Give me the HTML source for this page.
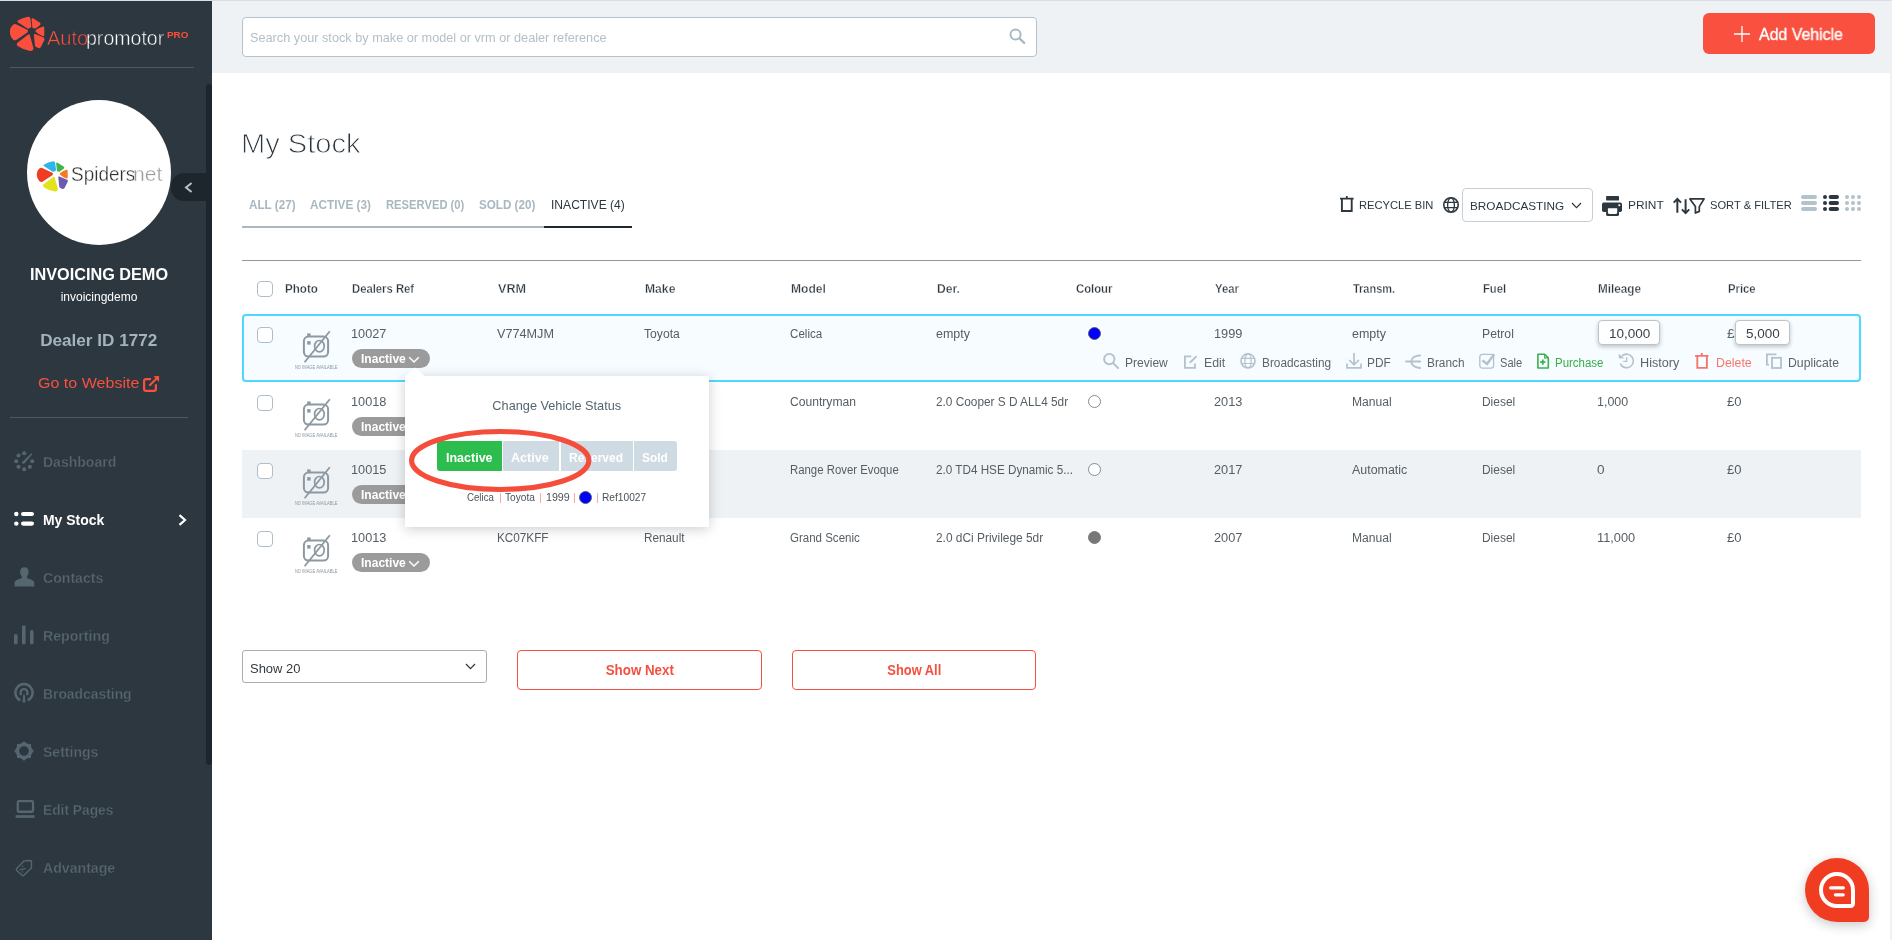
<!DOCTYPE html>
<html lang="en"><head><meta charset="utf-8"><title>My Stock - Autopromotor PRO</title>
<style>

html,body{margin:0;padding:0}
body{width:1892px;height:940px;overflow:hidden;position:relative;background:#fff;font-family:"Liberation Sans",sans-serif;}
#page{position:absolute;left:0;top:0;width:1892px;height:940px;overflow:hidden;will-change:transform}
.t{position:absolute;white-space:nowrap;display:inline-block}
.a{position:absolute}
svg{position:absolute;overflow:visible}
.cb{position:absolute;width:14px;height:14px;border:1px solid #adbecb;border-radius:4px;background:#fff}
.badge{position:absolute;left:352px;width:78px;height:19px;border-radius:10px;background:#9b9b9b}
.row{position:absolute;left:242px;width:1619px;height:68px}

</style></head>
<body>
<div id="page">
<div id="bg">
<div class="a" style="left:0;top:0;width:212px;height:940px;background:#2d373f"></div>
<div class="a" style="left:212px;top:0;width:1680px;height:73px;background:#eef2f5"></div>
<div class="a" style="left:1890px;top:0;width:2px;height:940px;background:#f0f1f2"></div>
<div class="a" style="left:0;top:0;width:1892px;height:1px;background:#d9dee2"></div>
<div class="a" style="left:206px;top:84px;width:6px;height:681px;background:#1e262d;border-radius:3px"></div>
<div class="a" style="left:171px;top:173px;width:36px;height:28px;background:#1e262d;border-radius:13px 0 0 13px"></div>
<svg style="left:184px;top:182px" width="9" height="11" viewBox="0 0 9 11" fill="none" stroke="#b4c1c9" stroke-width="2"><path d="M7.6 1 L2 5.5 L7.6 10"/></svg>
</div>
<aside id="sidebar">
<svg style="left:8px;top:13px" width="40" height="42" viewBox="0 0 895 940" preserveAspectRatio="none"><path d="M232,188 Q330,126 452,104 Q474,102 478,128 L502,300 Q498,322 448,330 Z" fill="#fb4f3d" stroke="#fb4f3d" stroke-width="44" stroke-linejoin="round"/><path d="M548,138 L700,232 Q712,244 700,256 L612,322 Q596,330 566,316 Z" fill="#fb4f3d" stroke="#fb4f3d" stroke-width="44" stroke-linejoin="round"/><path d="M790,322 L790,500 Q700,470 640,410 Q636,398 648,390 Q720,340 790,322 Z" fill="#fb4f3d" stroke="#fb4f3d" stroke-width="44" stroke-linejoin="round"/><path d="M600,490 L790,570 Q800,580 794,596 L712,756 Q696,772 676,760 L626,730 Z" fill="#fb4f3d" stroke="#fb4f3d" stroke-width="44" stroke-linejoin="round"/><path d="M466,498 L548,790 Q548,830 500,830 Q340,800 228,722 Q210,702 226,682 Z" fill="#fb4f3d" stroke="#fb4f3d" stroke-width="44" stroke-linejoin="round"/><path d="M170,272 L420,392 Q432,404 420,418 L172,586 Q150,594 128,580 Q66,520 64,420 Q66,330 128,278 Q150,262 170,272 Z" fill="#fb4f3d" stroke="#fb4f3d" stroke-width="44" stroke-linejoin="round"/></svg>
<span class="t" style="left:46.70px;top:28.07px;font-size:20px;line-height:20px;color:#fb4f3d;transform:scaleX(1.0011);transform-origin:0 0;-webkit-text-stroke:0.5px #2d373f;">Auto</span><span class="t" style="left:85.70px;top:28.07px;font-size:20px;line-height:20px;color:#ffffff;transform:scaleX(0.9771);transform-origin:0 0;-webkit-text-stroke:0.5px #2d373f;">promotor</span>
<span class="t" style="left:167.41px;top:30.88px;font-size:9px;line-height:9px;font-weight:700;color:#fb4f3d;transform:scaleX(1.1012);transform-origin:0 0;">PRO</span>
<div class="a" style="left:10px;top:67px;width:184px;height:1px;background:#4b5a64"></div>
<div class="a" style="left:27px;top:100px;width:144px;height:145px;border-radius:50%;background:#fff"></div>
<svg style="left:35.2px;top:157.6px" width="36" height="37" viewBox="0 0 895 940" preserveAspectRatio="none"><path d="M232,188 Q330,126 452,104 Q474,102 478,128 L502,300 Q498,322 448,330 Z" fill="#2fb5e9" stroke="#2fb5e9" stroke-width="44" stroke-linejoin="round"/><path d="M548,138 L700,232 Q712,244 700,256 L612,322 Q596,330 566,316 Z" fill="#3fb54a" stroke="#3fb54a" stroke-width="44" stroke-linejoin="round"/><path d="M790,322 L790,500 Q700,470 640,410 Q636,398 648,390 Q720,340 790,322 Z" fill="#f47a20" stroke="#f47a20" stroke-width="44" stroke-linejoin="round"/><path d="M600,490 L790,570 Q800,580 794,596 L712,756 Q696,772 676,760 L626,730 Z" fill="#6f58b0" stroke="#6f58b0" stroke-width="44" stroke-linejoin="round"/><path d="M466,498 L548,790 Q548,830 500,830 Q340,800 228,722 Q210,702 226,682 Z" fill="#e2e21e" stroke="#e2e21e" stroke-width="44" stroke-linejoin="round"/><path d="M170,272 L420,392 Q432,404 420,418 L172,586 Q150,594 128,580 Q66,520 64,420 Q66,330 128,278 Q150,262 170,272 Z" fill="#ef3d23" stroke="#ef3d23" stroke-width="44" stroke-linejoin="round"/></svg>
<span class="t" style="left:70.64px;top:162.72px;font-size:21px;line-height:21px;color:#303030;transform:scaleX(0.9032);transform-origin:0 0;-webkit-text-stroke:0.35px #fff;">Spiders</span><span class="t" style="left:132.63px;top:162.72px;font-size:21px;line-height:21px;color:#9a9a9a;transform:scaleX(1.0037);transform-origin:0 0;-webkit-text-stroke:0.4px #fff;">net</span>
<span class="t" style="left:30.99px;top:267.46px;font-size:16px;line-height:16px;font-weight:700;color:#fff;transform:scaleX(1.0150);transform-origin:50% 0;">INVOICING DEMO</span>
<span class="t" style="left:60.64px;top:290.54px;font-size:12px;line-height:12px;color:#fff;transform:scaleX(1.0000);transform-origin:50% 0;">invoicingdemo</span>
<span class="t" style="left:44.30px;top:332.56px;font-size:16px;line-height:16px;font-weight:700;color:#a3b3bd;transform:scaleX(1.0708);transform-origin:50% 0;">Dealer ID 1772</span>
<span class="t" style="left:37.89px;top:375.65px;font-size:14px;line-height:14px;color:#f9503f;transform:scaleX(1.1466);transform-origin:0 0;">Go to Website</span>
<svg style="left:143px;top:376px" width="17" height="16" viewBox="0 0 17 16" fill="none" stroke="#f9503f" stroke-width="2.2">
<path d="M8 3.2 H3 a1.9 1.9 0 0 0 -1.9 1.9 V13 a1.9 1.9 0 0 0 1.9 1.9 H11 a1.9 1.9 0 0 0 1.9 -1.9 V8.2"/><path d="M6.3 9.7 L14 2" stroke-width="2"/><path d="M10.5 0.3 L16.05 -0.05 L16.05 5.9 Z" fill="#f9503f" stroke="none"/></svg>
<div class="a" style="left:10px;top:417px;width:178px;height:1px;background:#4b5a64"></div>
<nav id="menu">
<span class="t" style="left:42.89px;top:455.15px;font-size:14px;line-height:14px;font-weight:700;color:#566670;transform:scaleX(1.0012);transform-origin:0 0;-webkit-text-stroke:0.3px #2d373f;">Dashboard</span>
<span class="t" style="left:42.89px;top:513.15px;font-size:14px;line-height:14px;font-weight:700;color:#fff;transform:scaleX(0.9947);transform-origin:0 0;">My Stock</span>
<span class="t" style="left:42.89px;top:571.15px;font-size:14px;line-height:14px;font-weight:700;color:#566670;transform:scaleX(1.0064);transform-origin:0 0;-webkit-text-stroke:0.3px #2d373f;">Contacts</span>
<span class="t" style="left:42.89px;top:629.15px;font-size:14px;line-height:14px;font-weight:700;color:#566670;transform:scaleX(1.0103);transform-origin:0 0;-webkit-text-stroke:0.3px #2d373f;">Reporting</span>
<span class="t" style="left:42.89px;top:687.15px;font-size:14px;line-height:14px;font-weight:700;color:#566670;transform:scaleX(0.9899);transform-origin:0 0;-webkit-text-stroke:0.3px #2d373f;">Broadcasting</span>
<span class="t" style="left:42.89px;top:745.15px;font-size:14px;line-height:14px;font-weight:700;color:#566670;transform:scaleX(1.0027);transform-origin:0 0;-webkit-text-stroke:0.3px #2d373f;">Settings</span>
<span class="t" style="left:42.89px;top:803.15px;font-size:14px;line-height:14px;font-weight:700;color:#566670;transform:scaleX(0.9842);transform-origin:0 0;-webkit-text-stroke:0.3px #2d373f;">Edit Pages</span>
<span class="t" style="left:42.89px;top:861.15px;font-size:14px;line-height:14px;font-weight:700;color:#566670;transform:scaleX(1.0088);transform-origin:0 0;-webkit-text-stroke:0.3px #2d373f;">Advantage</span>
<svg style="left:13.8px;top:450.8px" width="21" height="21" viewBox="0 0 21 21" fill="#566670"><circle cx="10.20" cy="2.20" r="2.05"/><circle cx="4.54" cy="4.54" r="2.05"/><circle cx="2.20" cy="10.20" r="2.05"/><circle cx="4.54" cy="15.86" r="2.05"/><circle cx="10.20" cy="18.20" r="2.05"/><circle cx="15.86" cy="15.86" r="2.05"/><circle cx="18.20" cy="10.20" r="2.05"/><path d="M8.2 11 L17.4 2.3 L18.4 3.3 L10.4 12.6 Q9 13.2 8.2 12.3 Q7.7 11.6 8.2 11 Z"/></svg>
<svg style="left:14px;top:511px" width="20" height="16" viewBox="0 0 20 16" fill="#fff"><circle cx="2.3" cy="3" r="2.2"/><circle cx="2.3" cy="12.6" r="2.2"/><rect x="7" y="0.9" width="13" height="4.2" rx="2.1"/><rect x="7" y="10.5" width="13" height="4.2" rx="2.1"/></svg>
<svg style="left:177.5px;top:513.5px" width="9" height="12" viewBox="0 0 9 12" fill="none" stroke="#fff" stroke-width="2.2"><path d="M1.5 1.2 L7 6 L1.5 10.8"/></svg>
<svg style="left:13.5px;top:567px" width="21" height="20" viewBox="0 0 21 20" fill="#566670"><path d="M10.4 0.3 C13.2 0.3 14.6 2.4 14.6 4.9 C14.6 7 13.6 8.6 12.9 9.4 C12.7 10.6 13.4 11.2 15 11.8 C18 12.9 20.3 13.8 20.3 16.4 V19.6 H0.5 V16.4 C0.5 13.8 2.8 12.9 5.8 11.8 C7.4 11.2 8.1 10.6 7.9 9.4 C7.2 8.6 6.2 7 6.2 4.9 C6.2 2.4 7.6 0.3 10.4 0.3 Z"/></svg>
<svg style="left:14px;top:624.5px" width="20" height="20" viewBox="0 0 20 20" fill="#566670"><rect x="0" y="9" width="3.6" height="10.6" rx="1.8"/><rect x="8" y="0.2" width="3.6" height="19.4" rx="1.8"/><rect x="16" y="5" width="3.6" height="14.6" rx="1.8"/></svg>
<svg style="left:14px;top:683px" width="20" height="20" viewBox="0 0 20 20" fill="none" stroke="#566670" stroke-width="2.5"><path d="M6.23 17.33 A8.6 8.6 0 1 1 13.77 17.33"/><path d="M7.4 11.94 A3.5 3.5 0 1 1 12.6 11.94" stroke-width="2.3"/><path d="M9.3 11.6 L10.7 11.6 L11.5 19.4 L8.5 19.4 Z" fill="#566670" stroke="none"/></svg>
<svg style="left:14px;top:740.9px" width="20" height="20" viewBox="0 0 20 20" fill="#566670"><path d="M7.2 3.4 L10 0.9 L12.8 3.4 Z" stroke="#566670" stroke-width="1.2" stroke-linejoin="round" transform="rotate(0 10 10)"/><path d="M7.2 3.4 L10 0.9 L12.8 3.4 Z" stroke="#566670" stroke-width="1.2" stroke-linejoin="round" transform="rotate(45 10 10)"/><path d="M7.2 3.4 L10 0.9 L12.8 3.4 Z" stroke="#566670" stroke-width="1.2" stroke-linejoin="round" transform="rotate(90 10 10)"/><path d="M7.2 3.4 L10 0.9 L12.8 3.4 Z" stroke="#566670" stroke-width="1.2" stroke-linejoin="round" transform="rotate(135 10 10)"/><path d="M7.2 3.4 L10 0.9 L12.8 3.4 Z" stroke="#566670" stroke-width="1.2" stroke-linejoin="round" transform="rotate(180 10 10)"/><path d="M7.2 3.4 L10 0.9 L12.8 3.4 Z" stroke="#566670" stroke-width="1.2" stroke-linejoin="round" transform="rotate(225 10 10)"/><path d="M7.2 3.4 L10 0.9 L12.8 3.4 Z" stroke="#566670" stroke-width="1.2" stroke-linejoin="round" transform="rotate(270 10 10)"/><path d="M7.2 3.4 L10 0.9 L12.8 3.4 Z" stroke="#566670" stroke-width="1.2" stroke-linejoin="round" transform="rotate(315 10 10)"/><path fill-rule="evenodd" d="M10 2 A8 8 0 1 0 10 18 A8 8 0 1 0 10 2 Z M10 5.2 A4.8 4.8 0 1 1 10 14.8 A4.8 4.8 0 1 1 10 5.2 Z"/></svg>
<svg style="left:14.5px;top:800px" width="20" height="18" viewBox="0 0 20 18" fill="none" stroke="#566670" stroke-width="2.3"><rect x="2.8" y="1.15" width="15.2" height="10.6" rx="1"/><rect x="0.6" y="15.2" width="18.9" height="2.7" fill="#566670" stroke="none"/></svg>
<svg style="left:15px;top:860px" width="19" height="17" viewBox="0 0 19 17" fill="none" stroke="#566670" stroke-width="1.4" stroke-linejoin="round" stroke-linecap="round"><path d="M9.2 0.85 L15.6 0.45 Q16.5 0.45 16.5 1.4 L16.4 7.9 L8.9 15.3 Q8 16.1 7.1 15.3 L1.7 10.4 Q0.8 9.5 1.7 8.5 Z"/><path d="M5.2 9.95 L10.2 8.55" stroke-width="1.3"/><circle cx="7.5" cy="6.6" r="0.75" fill="#566670" stroke="none"/><circle cx="7.7" cy="12" r="0.75" fill="#566670" stroke="none"/></svg>
</nav>
</aside>
<header id="topbar">
<div class="a" style="left:242px;top:17px;width:793px;height:38px;border:1px solid #b4c3cd;border-radius:4px;background:#fff"></div>
<span class="t" style="left:250.16px;top:30.50px;font-size:13px;line-height:13px;color:#b3bfc7;transform:scaleX(0.9772);transform-origin:0 0;">Search your stock by make or model or vrm or dealer reference</span>
<svg style="left:1008.5px;top:28.5px" width="17" height="16" viewBox="0 0 17 16" fill="none" stroke="#a9b8c1" stroke-width="1.9" stroke-linecap="round"><circle cx="6.55" cy="5.5" r="5.05"/><path d="M10.4 9.4 L15.2 13.9" stroke-width="2.2"/></svg>
<div class="a" style="left:1703px;top:13px;width:172px;height:41px;border-radius:6px;background:#f9503f"></div>
<svg style="left:1734px;top:26px" width="16" height="16" viewBox="0 0 16 16" fill="none" stroke="#fff" stroke-width="1.3"><path d="M8 0 V16 M0 8 H16"/></svg>
<span class="t" style="left:1759.46px;top:27.46px;font-size:16px;line-height:16px;color:#fff;transform:scaleX(0.9932);transform-origin:0 0;-webkit-text-stroke:0.35px #fff;">Add Vehicle</span>
</header>
<main id="content">
<span class="t" style="left:240.95px;top:128.86px;font-size:28.4px;line-height:28.4px;color:#2d373f;transform:scaleX(1.0246);transform-origin:0 0;-webkit-text-stroke:0.9px #fff;">My Stock</span>
<span class="t" style="left:249.11px;top:198.87px;font-size:12.2px;line-height:12.2px;font-weight:700;color:#a9b7c0;transform:scaleX(0.9590);transform-origin:0 0;">ALL (27)</span>
<span class="t" style="left:310.41px;top:198.87px;font-size:12.2px;line-height:12.2px;font-weight:700;color:#a9b7c0;transform:scaleX(0.9676);transform-origin:0 0;">ACTIVE (3)</span>
<span class="t" style="left:386.21px;top:198.87px;font-size:12.2px;line-height:12.2px;font-weight:700;color:#a9b7c0;transform:scaleX(0.9203);transform-origin:0 0;">RESERVED (0)</span>
<span class="t" style="left:479.21px;top:198.87px;font-size:12.2px;line-height:12.2px;font-weight:700;color:#a9b7c0;transform:scaleX(0.9562);transform-origin:0 0;">SOLD (20)</span>
<span class="t" style="left:550.91px;top:198.87px;font-size:12.2px;line-height:12.2px;color:#2d373f;transform:scaleX(0.9912);transform-origin:0 0;">INACTIVE (4)</span>
<div class="a" style="left:242px;top:226px;width:302px;height:2px;background:#a9b7c0"></div>
<div class="a" style="left:544px;top:226px;width:88px;height:2px;background:#1f2830"></div>
<svg style="left:1340px;top:196px" width="14" height="16" viewBox="0 0 14 16" fill="none" stroke="#2d373f" stroke-width="1.7"><path d="M0 2.6 H13.6 M6.8 2.6 V0"/><path d="M1.9 3 V15 H11.7 V3" stroke-width="1.9"/></svg>
<span class="t" style="left:1358.77px;top:199.92px;font-size:11.2px;line-height:11.2px;color:#2d373f;transform:scaleX(0.9976);transform-origin:0 0;">RECYCLE BIN</span>
<svg style="left:1443px;top:197px" width="16" height="16" viewBox="0 0 16 16" fill="none" stroke="#2d373f" stroke-width="1.3"><circle cx="8" cy="8" r="7.2" stroke-width="1.6"/><ellipse cx="8" cy="8" rx="3.4" ry="7.2"/><path d="M1.4 5.4 H14.6 M1.4 10.6 H14.6"/></svg>
<div class="a" style="left:1462px;top:188px;width:129px;height:32px;border:1px solid #c6cfd5;border-radius:4px;background:#fff"></div>
<span class="t" style="left:1470.27px;top:200.52px;font-size:11.2px;line-height:11.2px;color:#2d373f;transform:scaleX(1.0527);transform-origin:0 0;">BROADCASTING</span>
<svg style="left:1571px;top:202.2px" width="11" height="7" viewBox="0 0 11 7" fill="none" stroke="#2d373f" stroke-width="1.2"><path d="M1 1 L5.5 5.6 L10 1"/></svg>
<svg style="left:1602px;top:196px" width="21" height="20" viewBox="0 0 21 20" fill="#2d373f"><rect x="4.1" y="0" width="12.9" height="4.5" rx="0.4"/><rect x="0" y="6.4" width="20" height="9.6" rx="1.8"/><rect x="4.1" y="11.1" width="12.9" height="8.9" rx="1.6"/><path d="M5.9 12.3 H15.2 V16.6 Q15.2 17.9 13.9 17.9 H7.2 Q5.9 17.9 5.9 16.6 Z" fill="#fff"/><circle cx="17.3" cy="9.2" r="1.05" fill="#fff"/></svg>
<span class="t" style="left:1627.57px;top:199.92px;font-size:11.2px;line-height:11.2px;color:#2d373f;transform:scaleX(1.0646);transform-origin:0 0;">PRINT</span>
<svg style="left:1672.5px;top:198px" width="17" height="16" viewBox="0 0 17 16" fill="none" stroke="#2d373f" stroke-width="2"><path d="M4.35 14.8 V1 M0.7 4.6 L4.35 0.9 L8 4.6"/><path d="M12.6 1.2 V15 M8.95 11.4 L12.6 15.1 L16.25 11.4"/></svg>
<svg style="left:1689px;top:198px" width="16" height="16" viewBox="0 0 16 16" fill="none" stroke="#2d373f" stroke-width="1.7" stroke-linejoin="round"><path d="M0.9 0.9 H15.1 L10.3 8.6 V13.4 L6.4 15 V8.6 Z"/></svg>
<span class="t" style="left:1709.57px;top:199.92px;font-size:11.2px;line-height:11.2px;color:#2d373f;transform:scaleX(0.9960);transform-origin:0 0;">SORT &amp; FILTER</span>
<svg style="left:1801px;top:195px" width="16" height="16" viewBox="0 0 16 16" fill="#b3c2cb"><rect x="0" y="0" width="16" height="4" rx="2"/><rect x="0" y="6" width="16" height="4" rx="2"/><rect x="0" y="12" width="16" height="4" rx="2"/></svg>
<svg style="left:1823px;top:195px" width="16" height="16" viewBox="0 0 16 16" fill="#2d373f"><circle cx="2" cy="2" r="2"/><circle cx="2" cy="8" r="2"/><circle cx="2" cy="14" r="2"/><rect x="5.6" y="0" width="10.4" height="4" rx="2"/><rect x="5.6" y="6" width="10.4" height="4" rx="2"/><rect x="5.6" y="12" width="10.4" height="4" rx="2"/></svg>
<svg style="left:1845px;top:195px" width="16" height="16" viewBox="0 0 16 16" fill="#b3c2cb"><circle cx="2" cy="2" r="2"/><circle cx="2" cy="8" r="2"/><circle cx="2" cy="14" r="2"/><circle cx="8" cy="2" r="2"/><circle cx="8" cy="8" r="2"/><circle cx="8" cy="14" r="2"/><circle cx="14" cy="2" r="2"/><circle cx="14" cy="8" r="2"/><circle cx="14" cy="14" r="2"/></svg>
<section id="stock-table">
<div class="a" style="left:242px;top:260px;width:1619px;height:1px;background:#8f989e"></div>
<div class="cb" style="left:257px;top:281px"></div>
<span class="t" style="left:285.42px;top:282.74px;font-size:12px;line-height:12px;font-weight:700;color:#2d373f;transform:scaleX(0.9666);transform-origin:0 0;-webkit-text-stroke:0.3px #fff;">Photo</span>
<span class="t" style="left:351.72px;top:282.74px;font-size:12px;line-height:12px;font-weight:700;color:#2d373f;transform:scaleX(0.9407);transform-origin:0 0;-webkit-text-stroke:0.3px #fff;">Dealers Ref</span>
<span class="t" style="left:497.72px;top:282.74px;font-size:12px;line-height:12px;font-weight:700;color:#2d373f;transform:scaleX(1.0494);transform-origin:0 0;-webkit-text-stroke:0.3px #fff;">VRM</span>
<span class="t" style="left:644.72px;top:282.74px;font-size:12px;line-height:12px;font-weight:700;color:#2d373f;transform:scaleX(1.0122);transform-origin:0 0;-webkit-text-stroke:0.3px #fff;">Make</span>
<span class="t" style="left:790.72px;top:282.74px;font-size:12px;line-height:12px;font-weight:700;color:#2d373f;transform:scaleX(1.0051);transform-origin:0 0;-webkit-text-stroke:0.3px #fff;">Model</span>
<span class="t" style="left:936.72px;top:282.74px;font-size:12px;line-height:12px;font-weight:700;color:#2d373f;transform:scaleX(1.0099);transform-origin:0 0;-webkit-text-stroke:0.3px #fff;">Der.</span>
<span class="t" style="left:1075.72px;top:282.74px;font-size:12px;line-height:12px;font-weight:700;color:#2d373f;transform:scaleX(0.9420);transform-origin:0 0;-webkit-text-stroke:0.3px #fff;">Colour</span>
<span class="t" style="left:1214.72px;top:282.74px;font-size:12px;line-height:12px;font-weight:700;color:#2d373f;transform:scaleX(0.9466);transform-origin:0 0;-webkit-text-stroke:0.3px #fff;">Year</span>
<span class="t" style="left:1352.72px;top:282.74px;font-size:12px;line-height:12px;font-weight:700;color:#2d373f;transform:scaleX(0.9129);transform-origin:0 0;-webkit-text-stroke:0.3px #fff;">Transm.</span>
<span class="t" style="left:1482.72px;top:282.74px;font-size:12px;line-height:12px;font-weight:700;color:#2d373f;transform:scaleX(0.9376);transform-origin:0 0;-webkit-text-stroke:0.3px #fff;">Fuel</span>
<span class="t" style="left:1597.72px;top:282.74px;font-size:12px;line-height:12px;font-weight:700;color:#2d373f;transform:scaleX(0.9774);transform-origin:0 0;-webkit-text-stroke:0.3px #fff;">Mileage</span>
<span class="t" style="left:1727.72px;top:282.74px;font-size:12px;line-height:12px;font-weight:700;color:#2d373f;transform:scaleX(0.9385);transform-origin:0 0;-webkit-text-stroke:0.3px #fff;">Price</span>
<div class="row" style="top:450px;background:#eef2f5"></div>
<div class="a" style="left:242px;top:314px;width:1615px;height:64px;border:2px solid #4fd8ff;border-radius:4px;background:#f6fcff"></div>
<div class="cb" style="left:257px;top:327px"></div>
<svg style="left:300px;top:329px" width="34" height="35" viewBox="0 0 34 35" fill="none" stroke="#8c99a1" stroke-width="2">
<rect x="3.9" y="7.6" width="24.2" height="20" rx="4.6"/><ellipse cx="19.4" cy="17.2" rx="4.8" ry="5.7" stroke-width="1.7"/>
<path d="M4.6 33.3 L29.8 2.2" stroke-width="1.8"/><rect x="7.2" y="4.4" width="3.4" height="2.6" fill="#8c99a1" stroke="none"/><rect x="7.2" y="12.1" width="3.4" height="3.5" fill="#8c99a1" stroke="none"/></svg>
<span class="t" style="left:290.33px;top:364.77px;font-size:5px;line-height:5px;color:#8a979f;transform:scaleX(0.8119);transform-origin:50% 0;">NO IMAGE AVAILABLE</span>
<span class="t" style="left:351.22px;top:327.84px;font-size:12px;line-height:12px;color:#555e64;transform:scaleX(1.0610);transform-origin:0 0;">10027</span>
<span class="t" style="left:497.22px;top:327.84px;font-size:12px;line-height:12px;color:#555e64;transform:scaleX(1.0542);transform-origin:0 0;">V774MJM</span>
<span class="t" style="left:644.22px;top:327.84px;font-size:12px;line-height:12px;color:#555e64;transform:scaleX(1.0130);transform-origin:0 0;">Toyota</span>
<span class="t" style="left:790.22px;top:327.84px;font-size:12px;line-height:12px;color:#555e64;transform:scaleX(0.9665);transform-origin:0 0;">Celica</span>
<span class="t" style="left:936.22px;top:327.84px;font-size:12px;line-height:12px;color:#555e64;transform:scaleX(1.0384);transform-origin:0 0;">empty</span>
<span class="t" style="left:1214.22px;top:327.84px;font-size:12px;line-height:12px;color:#555e64;transform:scaleX(1.0652);transform-origin:0 0;">1999</span>
<span class="t" style="left:1352.22px;top:327.84px;font-size:12px;line-height:12px;color:#555e64;transform:scaleX(1.0384);transform-origin:0 0;">empty</span>
<span class="t" style="left:1482.22px;top:327.84px;font-size:12px;line-height:12px;color:#555e64;transform:scaleX(1.0156);transform-origin:0 0;">Petrol</span>
<div class="badge" style="top:349px"></div><span class="t" style="left:360.72px;top:352.84px;font-size:12px;line-height:12px;font-weight:700;color:#fff;transform:scaleX(1.0026);transform-origin:0 0;">Inactive</span><svg style="left:408px;top:355.5px" width="12" height="8" viewBox="0 0 12 8" fill="none" stroke="#fff" stroke-width="1.5"><path d="M1.2 1.3 L6 6 L10.8 1.3"/></svg>
<div class="cb" style="left:257px;top:395px"></div>
<svg style="left:300px;top:397px" width="34" height="35" viewBox="0 0 34 35" fill="none" stroke="#8c99a1" stroke-width="2">
<rect x="3.9" y="7.6" width="24.2" height="20" rx="4.6"/><ellipse cx="19.4" cy="17.2" rx="4.8" ry="5.7" stroke-width="1.7"/>
<path d="M4.6 33.3 L29.8 2.2" stroke-width="1.8"/><rect x="7.2" y="4.4" width="3.4" height="2.6" fill="#8c99a1" stroke="none"/><rect x="7.2" y="12.1" width="3.4" height="3.5" fill="#8c99a1" stroke="none"/></svg>
<span class="t" style="left:290.33px;top:432.77px;font-size:5px;line-height:5px;color:#8a979f;transform:scaleX(0.8119);transform-origin:50% 0;">NO IMAGE AVAILABLE</span>
<span class="t" style="left:351.22px;top:395.84px;font-size:12px;line-height:12px;color:#555e64;transform:scaleX(1.0610);transform-origin:0 0;">10018</span>
<span class="t" style="left:790.22px;top:395.84px;font-size:12px;line-height:12px;color:#555e64;transform:scaleX(1.0094);transform-origin:0 0;">Countryman</span>
<span class="t" style="left:936.22px;top:395.84px;font-size:12px;line-height:12px;color:#555e64;transform:scaleX(0.9851);transform-origin:0 0;">2.0 Cooper S D ALL4 5dr</span>
<span class="t" style="left:1214.22px;top:395.84px;font-size:12px;line-height:12px;color:#555e64;transform:scaleX(1.0652);transform-origin:0 0;">2013</span>
<span class="t" style="left:1352.22px;top:395.84px;font-size:12px;line-height:12px;color:#555e64;transform:scaleX(1.0089);transform-origin:0 0;">Manual</span>
<span class="t" style="left:1482.22px;top:395.84px;font-size:12px;line-height:12px;color:#555e64;transform:scaleX(0.9950);transform-origin:0 0;">Diesel</span>
<span class="t" style="left:1597.22px;top:395.84px;font-size:12px;line-height:12px;color:#555e64;transform:scaleX(1.0382);transform-origin:0 0;">1,000</span>
<span class="t" style="left:1727.22px;top:395.84px;font-size:12px;line-height:12px;color:#555e64;transform:scaleX(1.0870);transform-origin:0 0;">£0</span>
<div class="badge" style="top:417px"></div><span class="t" style="left:360.72px;top:420.84px;font-size:12px;line-height:12px;font-weight:700;color:#fff;transform:scaleX(1.0026);transform-origin:0 0;">Inactive</span><svg style="left:408px;top:423.5px" width="12" height="8" viewBox="0 0 12 8" fill="none" stroke="#fff" stroke-width="1.5"><path d="M1.2 1.3 L6 6 L10.8 1.3"/></svg>
<div class="cb" style="left:257px;top:463px"></div>
<svg style="left:300px;top:465px" width="34" height="35" viewBox="0 0 34 35" fill="none" stroke="#8c99a1" stroke-width="2">
<rect x="3.9" y="7.6" width="24.2" height="20" rx="4.6"/><ellipse cx="19.4" cy="17.2" rx="4.8" ry="5.7" stroke-width="1.7"/>
<path d="M4.6 33.3 L29.8 2.2" stroke-width="1.8"/><rect x="7.2" y="4.4" width="3.4" height="2.6" fill="#8c99a1" stroke="none"/><rect x="7.2" y="12.1" width="3.4" height="3.5" fill="#8c99a1" stroke="none"/></svg>
<span class="t" style="left:290.33px;top:500.77px;font-size:5px;line-height:5px;color:#8a979f;transform:scaleX(0.8119);transform-origin:50% 0;">NO IMAGE AVAILABLE</span>
<span class="t" style="left:351.22px;top:463.84px;font-size:12px;line-height:12px;color:#555e64;transform:scaleX(1.0610);transform-origin:0 0;">10015</span>
<span class="t" style="left:790.22px;top:463.84px;font-size:12px;line-height:12px;color:#555e64;transform:scaleX(0.9480);transform-origin:0 0;">Range Rover Evoque</span>
<span class="t" style="left:936.22px;top:463.84px;font-size:12px;line-height:12px;color:#555e64;transform:scaleX(0.9746);transform-origin:0 0;">2.0 TD4 HSE Dynamic 5...</span>
<span class="t" style="left:1214.22px;top:463.84px;font-size:12px;line-height:12px;color:#555e64;transform:scaleX(1.0652);transform-origin:0 0;">2017</span>
<span class="t" style="left:1352.22px;top:463.84px;font-size:12px;line-height:12px;color:#555e64;transform:scaleX(1.0350);transform-origin:0 0;">Automatic</span>
<span class="t" style="left:1482.22px;top:463.84px;font-size:12px;line-height:12px;color:#555e64;transform:scaleX(0.9950);transform-origin:0 0;">Diesel</span>
<span class="t" style="left:1597.22px;top:463.84px;font-size:12px;line-height:12px;color:#555e64;transform:scaleX(1.1318);transform-origin:0 0;">0</span>
<span class="t" style="left:1727.22px;top:463.84px;font-size:12px;line-height:12px;color:#555e64;transform:scaleX(1.0870);transform-origin:0 0;">£0</span>
<div class="badge" style="top:485px"></div><span class="t" style="left:360.72px;top:488.84px;font-size:12px;line-height:12px;font-weight:700;color:#fff;transform:scaleX(1.0026);transform-origin:0 0;">Inactive</span><svg style="left:408px;top:491.5px" width="12" height="8" viewBox="0 0 12 8" fill="none" stroke="#fff" stroke-width="1.5"><path d="M1.2 1.3 L6 6 L10.8 1.3"/></svg>
<div class="cb" style="left:257px;top:531px"></div>
<svg style="left:300px;top:533px" width="34" height="35" viewBox="0 0 34 35" fill="none" stroke="#8c99a1" stroke-width="2">
<rect x="3.9" y="7.6" width="24.2" height="20" rx="4.6"/><ellipse cx="19.4" cy="17.2" rx="4.8" ry="5.7" stroke-width="1.7"/>
<path d="M4.6 33.3 L29.8 2.2" stroke-width="1.8"/><rect x="7.2" y="4.4" width="3.4" height="2.6" fill="#8c99a1" stroke="none"/><rect x="7.2" y="12.1" width="3.4" height="3.5" fill="#8c99a1" stroke="none"/></svg>
<span class="t" style="left:290.33px;top:568.77px;font-size:5px;line-height:5px;color:#8a979f;transform:scaleX(0.8119);transform-origin:50% 0;">NO IMAGE AVAILABLE</span>
<span class="t" style="left:351.22px;top:531.84px;font-size:12px;line-height:12px;color:#555e64;transform:scaleX(1.0610);transform-origin:0 0;">10013</span>
<span class="t" style="left:497.22px;top:531.84px;font-size:12px;line-height:12px;color:#555e64;transform:scaleX(0.9776);transform-origin:0 0;">KC07KFF</span>
<span class="t" style="left:644.22px;top:531.84px;font-size:12px;line-height:12px;color:#555e64;transform:scaleX(0.9801);transform-origin:0 0;">Renault</span>
<span class="t" style="left:790.22px;top:531.84px;font-size:12px;line-height:12px;color:#555e64;transform:scaleX(0.9593);transform-origin:0 0;">Grand Scenic</span>
<span class="t" style="left:936.22px;top:531.84px;font-size:12px;line-height:12px;color:#555e64;transform:scaleX(0.9920);transform-origin:0 0;">2.0 dCi Privilege 5dr</span>
<span class="t" style="left:1214.22px;top:531.84px;font-size:12px;line-height:12px;color:#555e64;transform:scaleX(1.0652);transform-origin:0 0;">2007</span>
<span class="t" style="left:1352.22px;top:531.84px;font-size:12px;line-height:12px;color:#555e64;transform:scaleX(1.0089);transform-origin:0 0;">Manual</span>
<span class="t" style="left:1482.22px;top:531.84px;font-size:12px;line-height:12px;color:#555e64;transform:scaleX(0.9950);transform-origin:0 0;">Diesel</span>
<span class="t" style="left:1597.22px;top:531.84px;font-size:12px;line-height:12px;color:#555e64;transform:scaleX(1.0647);transform-origin:0 0;">11,000</span>
<span class="t" style="left:1727.22px;top:531.84px;font-size:12px;line-height:12px;color:#555e64;transform:scaleX(1.0870);transform-origin:0 0;">£0</span>
<div class="badge" style="top:553px"></div><span class="t" style="left:360.72px;top:556.84px;font-size:12px;line-height:12px;font-weight:700;color:#fff;transform:scaleX(1.0026);transform-origin:0 0;">Inactive</span><svg style="left:408px;top:559.5px" width="12" height="8" viewBox="0 0 12 8" fill="none" stroke="#fff" stroke-width="1.5"><path d="M1.2 1.3 L6 6 L10.8 1.3"/></svg>
<div class="a" style="left:1088px;top:327px;width:11px;height:11px;border-radius:50%;background:#0000ff;border:1px solid #5a5a78;box-shadow:0 0 0 1.5px #fff"></div>
<div class="a" style="left:1088px;top:395px;width:11px;height:11px;border-radius:50%;background:#fff;border:1px solid #7f8b93"></div>
<div class="a" style="left:1088px;top:463px;width:11px;height:11px;border-radius:50%;background:#fff;border:1px solid #7f8b93"></div>
<div class="a" style="left:1088px;top:531px;width:11px;height:11px;border-radius:50%;background:#777;border:1px solid #777c80"></div>
<span class="t" style="left:1727.22px;top:327.84px;font-size:12px;line-height:12px;color:#5c656b;transform:scaleX(1.1318);transform-origin:0 0;">£</span>
<div class="a" style="left:1598px;top:320px;width:60px;height:23px;border:1px solid #b9c5cd;border-radius:4px;background:#fff;box-shadow:0 2px 4px rgba(0,0,0,.22)"></div>
<span class="t" style="left:1608.95px;top:326.70px;font-size:13px;line-height:13px;color:#3c4248;transform:scaleX(1.0387);transform-origin:0 0;">10,000</span>
<div class="a" style="left:1735px;top:320px;width:53px;height:23px;border:1px solid #b9c5cd;border-radius:4px;background:#fff;box-shadow:0 2px 4px rgba(0,0,0,.22)"></div>
<span class="t" style="left:1745.95px;top:326.70px;font-size:13px;line-height:13px;color:#3c4248;transform:scaleX(1.0377);transform-origin:0 0;">5,000</span>
<span class="t" style="left:1124.72px;top:356.64px;font-size:12px;line-height:12px;color:#5c656b;transform:scaleX(1.0027);transform-origin:0 0;">Preview</span>
<span class="t" style="left:1203.92px;top:356.64px;font-size:12px;line-height:12px;color:#5c656b;transform:scaleX(1.0245);transform-origin:0 0;">Edit</span>
<span class="t" style="left:1261.72px;top:356.64px;font-size:12px;line-height:12px;color:#5c656b;transform:scaleX(0.9860);transform-origin:0 0;">Broadcasting</span>
<span class="t" style="left:1367.22px;top:356.64px;font-size:12px;line-height:12px;color:#5c656b;transform:scaleX(0.9885);transform-origin:0 0;">PDF</span>
<span class="t" style="left:1426.62px;top:356.64px;font-size:12px;line-height:12px;color:#5c656b;transform:scaleX(0.9882);transform-origin:0 0;">Branch</span>
<span class="t" style="left:1500.22px;top:356.64px;font-size:12px;line-height:12px;color:#5c656b;transform:scaleX(0.9222);transform-origin:0 0;">Sale</span>
<span class="t" style="left:1555.22px;top:356.64px;font-size:12px;line-height:12px;color:#3cab4c;transform:scaleX(0.9564);transform-origin:0 0;">Purchase</span>
<span class="t" style="left:1640.22px;top:356.64px;font-size:12px;line-height:12px;color:#5c656b;transform:scaleX(1.0546);transform-origin:0 0;">History</span>
<span class="t" style="left:1716.02px;top:356.64px;font-size:12px;line-height:12px;color:#f8776b;transform:scaleX(1.0299);transform-origin:0 0;">Delete</span>
<span class="t" style="left:1787.72px;top:356.64px;font-size:12px;line-height:12px;color:#5c656b;transform:scaleX(1.0192);transform-origin:0 0;">Duplicate</span>
<svg style="left:1102px;top:352px" width="18" height="18" viewBox="0 0 18 18" fill="none" stroke="#b3c2cb" stroke-width="1.9" stroke-linecap="round"><circle cx="7.3" cy="7.1" r="5.2"/><path d="M11.2 11.2 L16 16"/></svg>
<svg style="left:1183px;top:354px" width="15" height="16" viewBox="0 0 15 16" fill="none" stroke="#b3c2cb" stroke-width="1.8"><path d="M8.2 2.4 H1.9 V13.9 H12 V9.6"/><path d="M6.8 8.8 L13.6 2.1" stroke-width="1.9"/></svg>
<svg style="left:1240px;top:353px" width="16" height="16" viewBox="0 0 16 16" fill="none" stroke="#b3c2cb" stroke-width="1.2"><circle cx="8" cy="7.9" r="7" stroke-width="1.6"/><ellipse cx="8" cy="7.9" rx="3.1" ry="7"/><path d="M1.4 5.3 H14.6 M1.4 10.5 H14.6"/></svg>
<svg style="left:1346px;top:353px" width="16" height="16" viewBox="0 0 16 16" fill="none" stroke="#b3c2cb" stroke-width="1.7"><path d="M8 0.1 V11.4 M3.2 7 L8 11.8 L12.8 7"/><path d="M1 10.6 V14.8 H15 V10.6"/></svg>
<svg style="left:1405px;top:353.5px" width="17" height="15" viewBox="0 0 17 15" fill="none" stroke="#b3c2cb" stroke-width="1.8" stroke-linecap="round"><path d="M1 7.5 H15.2"/><path d="M15.2 1.4 Q7.4 1.6 6 7.5 Q7.4 13.6 15.2 14"/></svg>
<svg style="left:1479px;top:353px" width="18" height="16" viewBox="0 0 18 16" fill="none" stroke="#b3c2cb" stroke-width="1.3"><rect x="0.8" y="1.3" width="13.8" height="13.8" rx="2.6"/><path d="M3.4 7.4 L8 11 L15.2 1.2" stroke-width="2.4"/></svg>
<svg style="left:1537px;top:353px" width="13" height="16" viewBox="0 0 13 16" fill="none" stroke="#3bb04f" stroke-width="1.6" stroke-linejoin="round"><path d="M0.9 1.2 H7.6 L11.3 4.9 V15 H0.9 Z"/><path d="M7.6 1.2 V4.9 H11.3" stroke-width="1.1"/><path d="M5.8 6.6 V11.8 M3.2 9.2 H8.4" stroke-width="1.7"/></svg>
<svg style="left:1617.5px;top:353px" width="17" height="16" viewBox="0 0 17 16" fill="none" stroke="#b3c2cb" stroke-width="1.6"><path d="M4 2.9 A6.8 6.8 0 1 1 2.3 10.6"/><path d="M0.7 0.8 L1 5.6 L6.2 5.2 Z" fill="#b3c2cb" stroke="none"/><path d="M8.7 4.3 V8.3 H5.3" stroke-width="1.3"/></svg>
<svg style="left:1695px;top:353px" width="14" height="16" viewBox="0 0 14 16" fill="none" stroke="#f8776b" stroke-width="1.9"><path d="M0 2.9 H13.6 M6.8 2.9 V0.1"/><path d="M2.3 3 V14.9 H11.9 V3"/></svg>
<svg style="left:1766px;top:353px" width="17" height="16" viewBox="0 0 17 16" fill="none" stroke="#b3c2cb" stroke-width="1.8"><path d="M3 11.6 H0.9 V1.4 H10.4"/><rect x="6" y="4.8" width="9" height="10.2"/></svg>
</section>
<div id="status-popup">
<div class="a" style="left:405px;top:376px;width:304px;height:151px;background:#fff;box-shadow:0 2px 12px rgba(0,0,0,.2)"></div>
<svg style="left:405px;top:367px" width="21" height="10" viewBox="0 0 21 10"><path d="M0 9.6 L10 0.6 L20 9.6 Z" fill="#fff"/></svg>
<div class="a" style="left:405px;top:376px;width:40px;height:20px;background:#fff"></div>
<span class="t" style="left:491.43px;top:399.20px;font-size:13px;line-height:13px;color:#55656f;transform:scaleX(0.9791);transform-origin:50% 0;">Change Vehicle Status</span>
<div class="a" style="left:437px;top:441px;width:65px;height:30px;background:#2dbd4e;border-radius:3px 0 0 3px"></div>
<div class="a" style="left:503.3px;top:441px;width:56px;height:30px;background:#cfdbe3"></div>
<div class="a" style="left:561px;top:441px;width:71.6px;height:30px;background:#cfdbe3"></div>
<div class="a" style="left:634px;top:441px;width:43px;height:30px;background:#cfdbe3;border-radius:0 3px 3px 0"></div>
<span class="t" style="left:445.65px;top:450.50px;font-size:13px;line-height:13px;font-weight:700;color:#fff;transform:scaleX(0.9618);transform-origin:0 0;">Inactive</span>
<span class="t" style="left:511.15px;top:450.50px;font-size:13px;line-height:13px;font-weight:700;color:#fff;transform:scaleX(0.9670);transform-origin:0 0;">Active</span>
<span class="t" style="left:568.55px;top:450.50px;font-size:13px;line-height:13px;font-weight:700;color:#fff;transform:scaleX(0.9225);transform-origin:0 0;">Reserved</span>
<span class="t" style="left:641.86px;top:450.50px;font-size:13px;line-height:13px;font-weight:700;color:#fff;transform:scaleX(0.9177);transform-origin:0 0;">Sold</span>
<span class="t" style="left:467.35px;top:492.84px;font-size:10px;line-height:10px;color:#4a5258;transform:scaleX(0.9668);transform-origin:0 0;">Celica</span>
<span class="t" style="left:505.35px;top:492.84px;font-size:10px;line-height:10px;color:#4a5258;transform:scaleX(1.0133);transform-origin:0 0;">Toyota</span>
<span class="t" style="left:545.85px;top:492.84px;font-size:10px;line-height:10px;color:#4a5258;transform:scaleX(1.0653);transform-origin:0 0;">1999</span>
<span class="t" style="left:601.85px;top:492.84px;font-size:10px;line-height:10px;color:#4a5258;transform:scaleX(1.0187);transform-origin:0 0;">Ref10027</span>
<span class="t" style="left:498.55px;top:492.84px;font-size:10px;line-height:10px;color:#f9a49b;transform:scaleX(1.1557);transform-origin:0 0;">|</span>
<span class="t" style="left:539.35px;top:492.84px;font-size:10px;line-height:10px;color:#f9a49b;transform:scaleX(1.1557);transform-origin:0 0;">|</span>
<span class="t" style="left:572.65px;top:492.84px;font-size:10px;line-height:10px;color:#f9a49b;transform:scaleX(1.1557);transform-origin:0 0;">|</span>
<span class="t" style="left:595.65px;top:492.84px;font-size:10px;line-height:10px;color:#f9a49b;transform:scaleX(1.1557);transform-origin:0 0;">|</span>
<div class="a" style="left:579px;top:491px;width:11px;height:11px;border-radius:50%;background:#0000ff;border:1px solid #5a5a78"></div>
<svg style="left:400px;top:420px" width="200" height="80" viewBox="400 420 200 80" fill="none"><ellipse cx="500.2" cy="460.5" rx="88.6" ry="29" stroke="#f54d3b" stroke-width="5.2"/></svg>
</div>
<div id="pager">
<div class="a" style="left:242px;top:650px;width:243px;height:31px;border:1px solid #a7adb1;border-radius:3px;background:#fff"></div>
<span class="t" style="left:250.16px;top:662.20px;font-size:13px;line-height:13px;color:#33393e;transform:scaleX(0.9977);transform-origin:0 0;">Show 20</span>
<svg style="left:465px;top:663px" width="11" height="7" viewBox="0 0 11 7" fill="none" stroke="#33393e" stroke-width="1.3"><path d="M1 1 L5.5 5.6 L10 1"/></svg>
<div class="a" style="left:517px;top:650px;width:243px;height:38px;border:1px solid #f4503f;border-radius:4px;background:#fff"></div>
<span class="t" style="left:603.51px;top:662.95px;font-size:14px;line-height:14px;font-weight:700;color:#f4503f;transform:scaleX(0.9531);transform-origin:50% 0;">Show Next</span>
<div class="a" style="left:792px;top:650px;width:242px;height:38px;border:1px solid #f4503f;border-radius:4px;background:#fff"></div>
<span class="t" style="left:884.70px;top:662.95px;font-size:14px;line-height:14px;font-weight:700;color:#f4503f;transform:scaleX(0.9208);transform-origin:50% 0;">Show All</span>
</div>
</main>
<div id="chat">
<div class="a" style="left:1805px;top:858px;width:64px;height:64px;border-radius:32px 32px 5px 32px;background:#f03d22;box-shadow:0 3px 12px rgba(0,0,0,.22)"></div>
<svg style="left:1819px;top:872px" width="36" height="36" viewBox="0 0 36 36" fill="none" stroke="#fff" stroke-linecap="round"><path d="M18 2 A16 16 0 0 1 34 18 V31.6 A2.4 2.4 0 0 1 31.6 34 H18 A16 16 0 0 1 18 2 Z" stroke-width="4"/><path d="M11.6 15.8 H24.4" stroke-width="3.2"/><path d="M16.4 22.8 H24.2" stroke-width="3.2"/></svg>
</div>
</div>
</body></html>
